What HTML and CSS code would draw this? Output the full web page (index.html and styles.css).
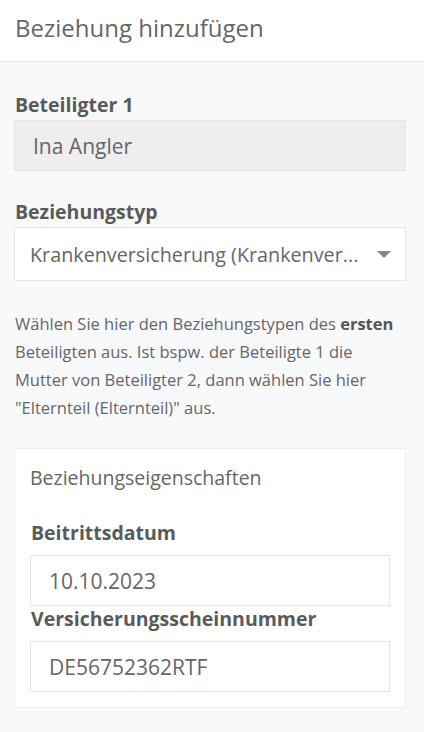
FILE: index.html
```html
<!DOCTYPE html>
<html lang="de">
<head>
<meta charset="utf-8">
<link rel="stylesheet" href="styles.css">
</head>
<body>
<header class="header">
  <h1 class="title">Beziehung hinzufügen</h1>
</header>
<main class="content">
  <div class="field">
    <label class="label">Beteiligter 1</label>
    <div class="input input-disabled">Ina Angler</div>
  </div>
  <div class="field field-type">
    <label class="label">Beziehungstyp</label>
    <div class="input select">
      <span class="select-text">Krankenversicherung (Krankenver...</span>
      <svg class="caret" width="14" height="7" viewBox="0 0 14 7"><path d="M0 0H14L7 7Z" fill="#888"/></svg>
    </div>
  </div>
  <p class="help">Wählen Sie hier den Beziehungstypen des <b>ersten</b> Beteiligten aus. Ist bspw. der Beteiligte 1 die Mutter von Beteiligter 2, dann wählen Sie hier "Elternteil (Elternteil)" aus.</p>
  <section class="card">
    <h2 class="card-title">Beziehungseigenschaften</h2>
    <div class="card-field">
      <label class="label">Beitrittsdatum</label>
      <div class="input">10.10.2023</div>
    </div>
    <div class="card-field card-field-2">
      <label class="label">Versicherungsscheinnummer</label>
      <div class="input">DE56752362RTF</div>
    </div>
  </section>
</main>
</body>
</html>
```
FILE: styles.css
```css
* { box-sizing: border-box; }
html, body { margin: 0; padding: 0; }
body {
  font-family: "Open Sans", sans-serif;
  background: #f8f9fa;
  color: #5f6368;
  width: 424px;
  min-height: 732px;
}
.header {
  height: 62px;
  background: #fff;
  border-bottom: 1px solid #e3e3e3;
  padding: 0 15px;
  display: flex;
  align-items: center;
}
.title {
  margin: 0 0 6px 0;
  font-size: 24px;
  font-weight: 400;
  color: #666;
  line-height: 32px;
}
.content {
  padding: 32px 18px 0 14px;
}
.label {
  display: block;
  font-size: 19.5px;
  font-weight: 700;
  color: #5a5a5a;
  line-height: 22px;
  padding-left: 1px;
  margin-bottom: 4px;
}
.input {
  height: 51px;
  border: 1px solid #e6e6e6;
  background: #fff;
  font-size: 21px;
  color: #666;
  display: flex;
  align-items: center;
  padding: 0 18px;
}
.input-disabled {
  background: #eeeeee;
}
.field-type { margin-top: 30px; }
.select {
  height: 54px;
  justify-content: space-between;
  padding-left: 15px;
  padding-right: 14px;
  font-size: 19.75px;
}
.select-text { white-space: nowrap; }
.caret { flex: none; margin-top: 1px; }
.help {
  margin: 29px 0 0 0;
  padding-left: 1px;
  font-size: 16.5px;
  line-height: 28px;
  color: #666;
}
.help b { font-weight: 700; color: #555; }
.card {
  margin-top: 26px;
  background: #fff;
  border: 1px solid #eceeef;
  padding: 14px 15px 15px 15px;
}
.card-title {
  margin: 0;
  font-size: 19.5px;
  font-weight: 400;
  color: #666;
  line-height: 29px;
}
.card-field { margin-top: 30px; }
.card-field .label { margin-bottom: 11px; }
.card-field-2 { margin-top: 2px; }
```
